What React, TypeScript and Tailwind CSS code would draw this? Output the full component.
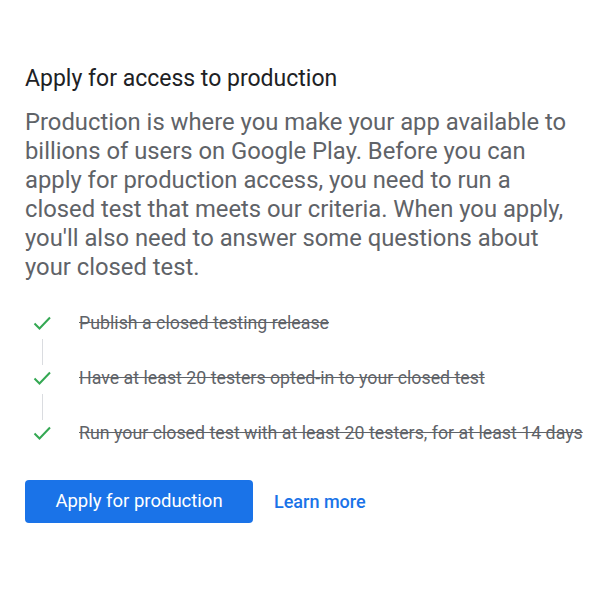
import React from 'react';

const steps = [
    'Publish a closed testing release',
    'Have at least 20 testers opted-in to your closed test',
    'Run your closed test with at least 20 testers, for at least 14 days',
];

const Check = () => (
    <svg width="20" height="18" viewBox="0 0 20 18" className="text-[#34a853]">
        <path d="M2.5 9.5l5 5L18 3.5" fill="none" stroke="currentColor" strokeWidth="2" />
    </svg>
);

export default function App() {
    return (
        <div className="w-[600px] h-[600px] bg-white font-['Roboto',sans-serif] pl-[25px] pt-[64px]">
            <h2 className="text-[23px] leading-[30px] text-[#202124]">Apply for access to production</h2>
            <p className="mt-[14px] w-[555px] text-[23.8px] leading-[29px] text-[#5f6368]">
                Production is where you make your app available to billions of users on Google Play. Before you can apply
                for production access, you need to run a closed test that meets our criteria. When you apply, you'll also
                need to answer some questions about your closed test.
            </p>

            <div className="mt-[28px] flex flex-col">
                {steps.map((s, i) => (
                    <div key={s} className="flex">
                        <div className="w-[34px] flex flex-col items-center">
                            <div className="h-[26px] flex items-center">
                                <Check />
                            </div>
                            {i < steps.length - 1 && <div className="mt-[3px] w-px h-[26px] bg-[#dadce0]" />}
                        </div>
                        <div className="ml-[20px] h-[26px] flex items-center text-[17.8px] text-[#5f6368] line-through">{s}</div>
                    </div>
                ))}
            </div>

            <div className="mt-[34px] flex items-center gap-[21px]">
                <button className="h-[43px] w-[228px] rounded-[4px] bg-[#1a73e8] text-white text-[18.5px]">
                    Apply for production
                </button>
                <a className="text-[18px] font-medium text-[#1a73e8]">Learn more</a>
            </div>
        </div>
    );
}
